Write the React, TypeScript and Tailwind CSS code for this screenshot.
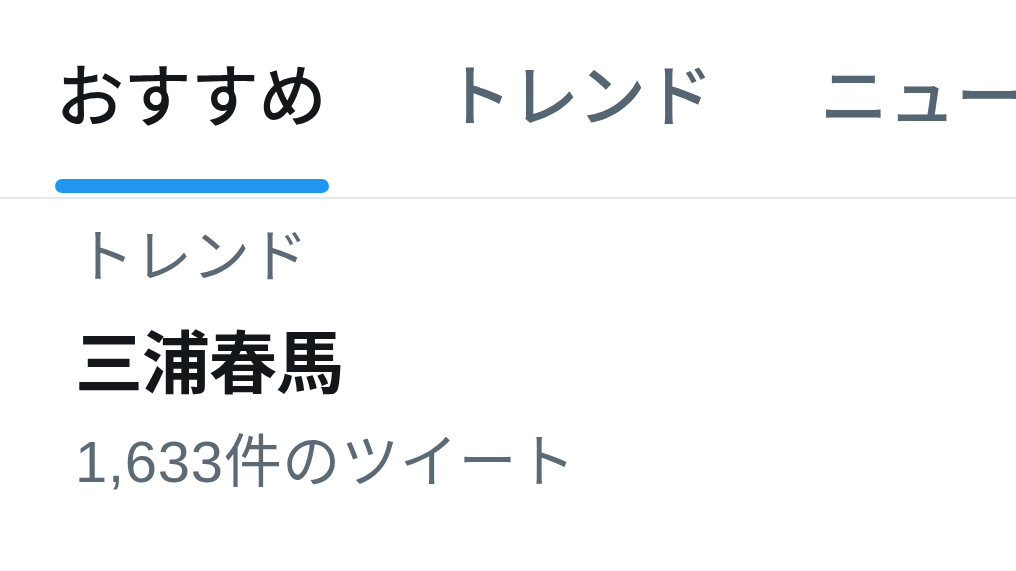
import React from "react";

export default function App() {
  const font = { fontFamily: '"Noto Sans CJK JP", "Noto Sans", sans-serif' };
  const mixed = { fontFamily: '"Liberation Sans", "Noto Sans CJK JP", sans-serif' };
  return (
    <div className="w-[1016px] h-[571px] bg-white overflow-hidden" style={font}>
      <div className="flex items-end h-[199px] border-b-2 border-[#e3e8ec] pl-[55px] whitespace-nowrap overflow-hidden">
        <div className="flex flex-col items-stretch w-[274px] shrink-0">
          <span className="text-[68px] leading-none font-medium text-[#14171a] pl-[1px] tracking-[-0.5px]">おすすめ</span>
          <div className="h-[14px] mt-[53px] mb-[4px] rounded-full bg-[#2196f0]"></div>
        </div>
        <div className="flex flex-col ml-[115px] shrink-0">
          <span className="text-[68px] leading-none font-medium text-[#556571] tracking-[-1px]">トレンド</span>
          <div className="h-[14px] mt-[53px] mb-[4px]"></div>
        </div>
        <div className="flex flex-col ml-[108px] shrink-0">
          <span className="text-[68px] leading-none font-medium text-[#556571]">ニュース</span>
          <div className="h-[14px] mt-[53px] mb-[4px]"></div>
        </div>
      </div>
      <div className="pl-[75px] pt-[24px] flex flex-col whitespace-nowrap">
        <span className="text-[58px] leading-none text-[#5c6a76] pl-[1px]">トレンド</span>
        <span className="text-[68px] leading-none font-semibold text-[#14171a] mt-[44px] tracking-[-1px]">三浦春馬</span>
        <span className="text-[58px] leading-none text-[#5c6a76] mt-[40px] tracking-[0.7px]" style={mixed}>1,633件のツイート</span>
      </div>
    </div>
  );
}
